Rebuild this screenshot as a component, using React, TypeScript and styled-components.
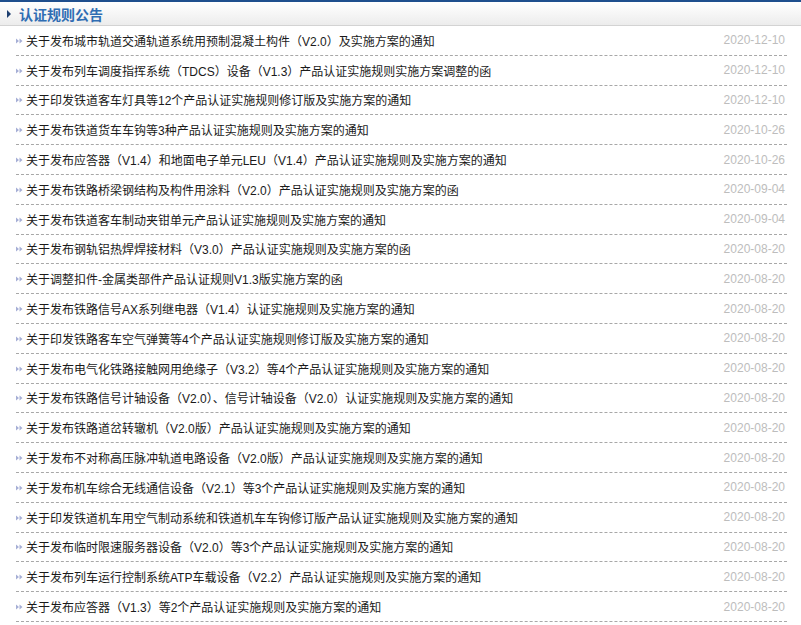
import React from 'react';
import styled, { createGlobalStyle } from 'styled-components';

const GlobalStyle = createGlobalStyle`
  html, body {
    margin: 0;
    padding: 0;
    background: #ffffff;
  }
  body {
    font-family: 'Liberation Sans', 'Noto Sans CJK SC', sans-serif;
  }
`;

const Panel = styled.div`
  width: 801px;
  background: #fff;
`;

const Header = styled.div`
  height: 23px;
  border-top: 2px solid #1f4f8e;
  border-bottom: 1px solid #d3d3d3;
  background: linear-gradient(to bottom, #ffffff 0%, #f6f6f6 50%, #ececec 100%);
  display: flex;
  align-items: center;
  padding-left: 7px;
  gap: 8px;
`;

const Arrow = styled.span`
  width: 0;
  height: 0;
  border-top: 4px solid transparent;
  border-bottom: 4px solid transparent;
  border-left: 4px solid #1e3f70;
`;

const Title = styled.h2`
  margin: 0;
  font-size: 14px;
  font-weight: bold;
  color: #2f6db3;
  font-family: 'Liberation Sans', 'Noto Sans CJK SC', sans-serif;
`;

const List = styled.ul`
  list-style: none;
  margin: 0 14px 0 16px;
  padding: 0;
`;

const Row = styled.li`
  height: 28.8px;
  border-bottom: 1px dashed #a8a8a8;
  display: flex;
  align-items: center;
  font-size: 12px;
`;

const Bullet = styled.svg`
  width: 7px;
  height: 6px;
  flex: none;
  margin-right: 3px;
  margin-top: 1px;
`;

const Link = styled.a`
  flex: 1;
  color: #1a1a1a;
  text-decoration: none;
  white-space: nowrap;
  overflow: hidden;
`;

const DateText = styled.span`
  color: #bdbdbd;
  font-size: 12px;
  margin-right: 2px;
`;

const items: [string, string][] = [
  ['关于发布城市轨道交通轨道系统用预制混凝土构件（V2.0）及实施方案的通知', '2020-12-10'],
  ['关于发布列车调度指挥系统（TDCS）设备（V1.3）产品认证实施规则实施方案调整的函', '2020-12-10'],
  ['关于印发铁道客车灯具等12个产品认证实施规则修订版及实施方案的通知', '2020-12-10'],
  ['关于发布铁道货车车钩等3种产品认证实施规则及实施方案的通知', '2020-10-26'],
  ['关于发布应答器（V1.4）和地面电子单元LEU（V1.4）产品认证实施规则及实施方案的通知', '2020-10-26'],
  ['关于发布铁路桥梁钢结构及构件用涂料（V2.0）产品认证实施规则及实施方案的函', '2020-09-04'],
  ['关于发布铁道客车制动夹钳单元产品认证实施规则及实施方案的通知', '2020-09-04'],
  ['关于发布钢轨铝热焊焊接材料（V3.0）产品认证实施规则及实施方案的函', '2020-08-20'],
  ['关于调整扣件-金属类部件产品认证规则V1.3版实施方案的函', '2020-08-20'],
  ['关于发布铁路信号AX系列继电器（V1.4）认证实施规则及实施方案的通知', '2020-08-20'],
  ['关于印发铁路客车空气弹簧等4个产品认证实施规则修订版及实施方案的通知', '2020-08-20'],
  ['关于发布电气化铁路接触网用绝缘子（V3.2）等4个产品认证实施规则及实施方案的通知', '2020-08-20'],
  ['关于发布铁路信号计轴设备（V2.0）、信号计轴设备（V2.0）认证实施规则及实施方案的通知', '2020-08-20'],
  ['关于发布铁路道岔转辙机（V2.0版）产品认证实施规则及实施方案的通知', '2020-08-20'],
  ['关于发布不对称高压脉冲轨道电路设备（V2.0版）产品认证实施规则及实施方案的通知', '2020-08-20'],
  ['关于发布机车综合无线通信设备（V2.1）等3个产品认证实施规则及实施方案的通知', '2020-08-20'],
  ['关于印发铁道机车用空气制动系统和铁道机车车钩修订版产品认证实施规则及实施方案的通知', '2020-08-20'],
  ['关于发布临时限速服务器设备（V2.0）等3个产品认证实施规则及实施方案的通知', '2020-08-20'],
  ['关于发布列车运行控制系统ATP车载设备（V2.2）产品认证实施规则及实施方案的通知', '2020-08-20'],
  ['关于发布应答器（V1.3）等2个产品认证实施规则及实施方案的通知', '2020-08-20'],
];

const BulletIcon = () => (
  <Bullet viewBox="0 0 7 6">
    <path d="M0 0.5 L3 3 L0 5.5 Z M3.5 0.5 L6.5 3 L3.5 5.5 Z" fill="#a6afd6" />
  </Bullet>
);

export default function App() {
  return (
    <>
      <GlobalStyle />
      <Panel>
        <Header>
          <Arrow />
          <Title>认证规则公告</Title>
        </Header>
        <List>
          {items.map(([title, date], i) => (
            <Row key={i}>
              <BulletIcon />
              <Link href="#">{title}</Link>
              <DateText>{date}</DateText>
            </Row>
          ))}
        </List>
      </Panel>
    </>
  );
}
